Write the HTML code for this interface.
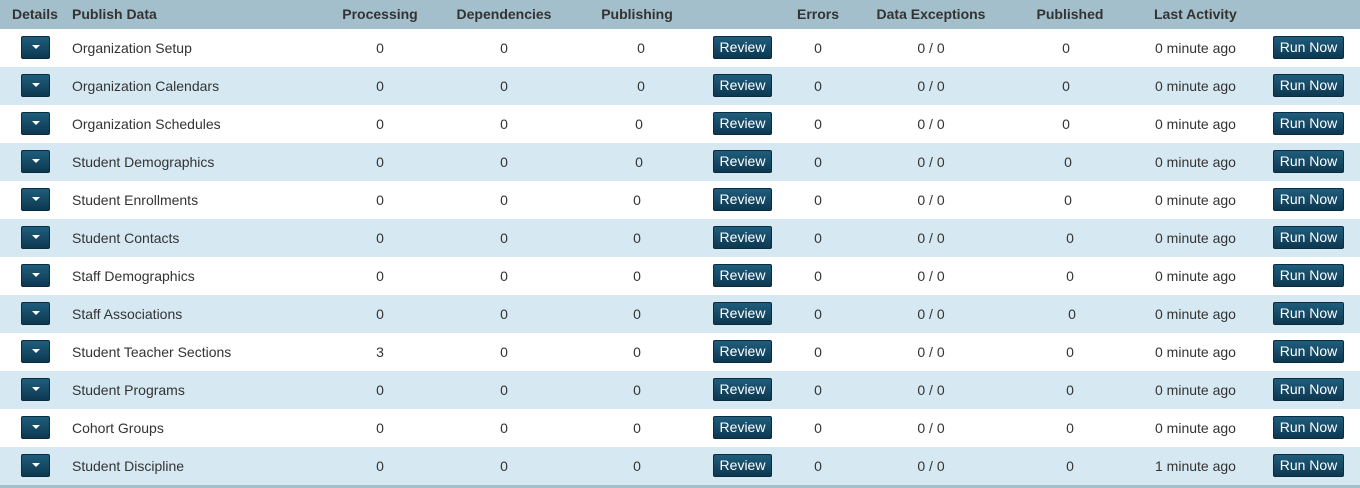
<!DOCTYPE html>
<html><head><style>
*{margin:0;padding:0;box-sizing:border-box}
body{width:1360px;height:488px;background:#fff;font-family:"Liberation Sans",sans-serif;font-size:14px;color:#333;position:relative;overflow:hidden}
.hd{position:absolute;left:0;top:0;width:1360px;height:29px;background:#a3bfcb;font-weight:bold;color:#333}
.r{position:absolute;left:0;width:1360px;height:38px}
.r.a{background:#d6e9f2}
.c{position:absolute;top:0;line-height:38px;white-space:nowrap}
.hd .c{line-height:29px}
.ctr{transform:translateX(-50%)}
.btn{position:absolute;top:7px;height:23px;background:linear-gradient(#1f5d7c,#0d3850);border:1px solid #0a2c40;border-radius:2px;color:#fff;line-height:21px;text-align:center;font-size:14px}
.dd{left:21px;width:29px}
.dd:after{content:"";position:absolute;left:10px;top:8px;border-left:4px solid transparent;border-right:4px solid transparent;border-top:4px solid #fff}
.rv{left:713px;width:59px}
.rn{left:1273px;width:71px}
.bot{position:absolute;left:0;top:485px;width:1360px;height:3px;background:#a3bfcb}
</style></head><body>
<div class="hd">
<span class="c" style="left:12px">Details</span>
<span class="c" style="left:72px">Publish Data</span>
<span class="c ctr" style="left:380px">Processing</span>
<span class="c ctr" style="left:504px">Dependencies</span>
<span class="c ctr" style="left:637px">Publishing</span>
<span class="c ctr" style="left:818px">Errors</span>
<span class="c ctr" style="left:931px">Data Exceptions</span>
<span class="c ctr" style="left:1070px">Published</span>
<span class="c" style="left:1154px">Last Activity</span>
</div>
<div id="rows"></div>
<div class="r" style="top:29px"><div class="btn dd"></div><span class="c" style="left:72px">Organization Setup</span><span class="c ctr" style="left:380px">0</span><span class="c ctr" style="left:504px">0</span><span class="c ctr" style="left:641px">0</span><div class="btn rv">Review</div><span class="c ctr" style="left:818px">0</span><span class="c ctr" style="left:931px">0 / 0</span><span class="c ctr" style="left:1066px">0</span><span class="c" style="left:1155px">0 minute ago</span><div class="btn rn">Run Now</div></div>
<div class="r a" style="top:67px"><div class="btn dd"></div><span class="c" style="left:72px">Organization Calendars</span><span class="c ctr" style="left:380px">0</span><span class="c ctr" style="left:504px">0</span><span class="c ctr" style="left:641px">0</span><div class="btn rv">Review</div><span class="c ctr" style="left:818px">0</span><span class="c ctr" style="left:931px">0 / 0</span><span class="c ctr" style="left:1066px">0</span><span class="c" style="left:1155px">0 minute ago</span><div class="btn rn">Run Now</div></div>
<div class="r" style="top:105px"><div class="btn dd"></div><span class="c" style="left:72px">Organization Schedules</span><span class="c ctr" style="left:380px">0</span><span class="c ctr" style="left:504px">0</span><span class="c ctr" style="left:639px">0</span><div class="btn rv">Review</div><span class="c ctr" style="left:818px">0</span><span class="c ctr" style="left:931px">0 / 0</span><span class="c ctr" style="left:1066px">0</span><span class="c" style="left:1155px">0 minute ago</span><div class="btn rn">Run Now</div></div>
<div class="r a" style="top:143px"><div class="btn dd"></div><span class="c" style="left:72px">Student Demographics</span><span class="c ctr" style="left:380px">0</span><span class="c ctr" style="left:504px">0</span><span class="c ctr" style="left:639px">0</span><div class="btn rv">Review</div><span class="c ctr" style="left:818px">0</span><span class="c ctr" style="left:931px">0 / 0</span><span class="c ctr" style="left:1068px">0</span><span class="c" style="left:1155px">0 minute ago</span><div class="btn rn">Run Now</div></div>
<div class="r" style="top:181px"><div class="btn dd"></div><span class="c" style="left:72px">Student Enrollments</span><span class="c ctr" style="left:380px">0</span><span class="c ctr" style="left:504px">0</span><span class="c ctr" style="left:637px">0</span><div class="btn rv">Review</div><span class="c ctr" style="left:818px">0</span><span class="c ctr" style="left:931px">0 / 0</span><span class="c ctr" style="left:1068px">0</span><span class="c" style="left:1155px">0 minute ago</span><div class="btn rn">Run Now</div></div>
<div class="r a" style="top:219px"><div class="btn dd"></div><span class="c" style="left:72px">Student Contacts</span><span class="c ctr" style="left:380px">0</span><span class="c ctr" style="left:504px">0</span><span class="c ctr" style="left:637px">0</span><div class="btn rv">Review</div><span class="c ctr" style="left:818px">0</span><span class="c ctr" style="left:931px">0 / 0</span><span class="c ctr" style="left:1070px">0</span><span class="c" style="left:1155px">0 minute ago</span><div class="btn rn">Run Now</div></div>
<div class="r" style="top:257px"><div class="btn dd"></div><span class="c" style="left:72px">Staff Demographics</span><span class="c ctr" style="left:380px">0</span><span class="c ctr" style="left:504px">0</span><span class="c ctr" style="left:637px">0</span><div class="btn rv">Review</div><span class="c ctr" style="left:818px">0</span><span class="c ctr" style="left:931px">0 / 0</span><span class="c ctr" style="left:1070px">0</span><span class="c" style="left:1155px">0 minute ago</span><div class="btn rn">Run Now</div></div>
<div class="r a" style="top:295px"><div class="btn dd"></div><span class="c" style="left:72px">Staff Associations</span><span class="c ctr" style="left:380px">0</span><span class="c ctr" style="left:504px">0</span><span class="c ctr" style="left:637px">0</span><div class="btn rv">Review</div><span class="c ctr" style="left:818px">0</span><span class="c ctr" style="left:931px">0 / 0</span><span class="c ctr" style="left:1072px">0</span><span class="c" style="left:1155px">0 minute ago</span><div class="btn rn">Run Now</div></div>
<div class="r" style="top:333px"><div class="btn dd"></div><span class="c" style="left:72px">Student Teacher Sections</span><span class="c ctr" style="left:380px">3</span><span class="c ctr" style="left:504px">0</span><span class="c ctr" style="left:637px">0</span><div class="btn rv">Review</div><span class="c ctr" style="left:818px">0</span><span class="c ctr" style="left:931px">0 / 0</span><span class="c ctr" style="left:1070px">0</span><span class="c" style="left:1155px">0 minute ago</span><div class="btn rn">Run Now</div></div>
<div class="r a" style="top:371px"><div class="btn dd"></div><span class="c" style="left:72px">Student Programs</span><span class="c ctr" style="left:380px">0</span><span class="c ctr" style="left:504px">0</span><span class="c ctr" style="left:637px">0</span><div class="btn rv">Review</div><span class="c ctr" style="left:818px">0</span><span class="c ctr" style="left:931px">0 / 0</span><span class="c ctr" style="left:1070px">0</span><span class="c" style="left:1155px">0 minute ago</span><div class="btn rn">Run Now</div></div>
<div class="r" style="top:409px"><div class="btn dd"></div><span class="c" style="left:72px">Cohort Groups</span><span class="c ctr" style="left:380px">0</span><span class="c ctr" style="left:504px">0</span><span class="c ctr" style="left:637px">0</span><div class="btn rv">Review</div><span class="c ctr" style="left:818px">0</span><span class="c ctr" style="left:931px">0 / 0</span><span class="c ctr" style="left:1070px">0</span><span class="c" style="left:1155px">0 minute ago</span><div class="btn rn">Run Now</div></div>
<div class="r a" style="top:447px"><div class="btn dd"></div><span class="c" style="left:72px">Student Discipline</span><span class="c ctr" style="left:380px">0</span><span class="c ctr" style="left:504px">0</span><span class="c ctr" style="left:637px">0</span><div class="btn rv">Review</div><span class="c ctr" style="left:818px">0</span><span class="c ctr" style="left:931px">0 / 0</span><span class="c ctr" style="left:1070px">0</span><span class="c" style="left:1155px">1 minute ago</span><div class="btn rn">Run Now</div></div>
<div class="bot"></div>
</body></html>
